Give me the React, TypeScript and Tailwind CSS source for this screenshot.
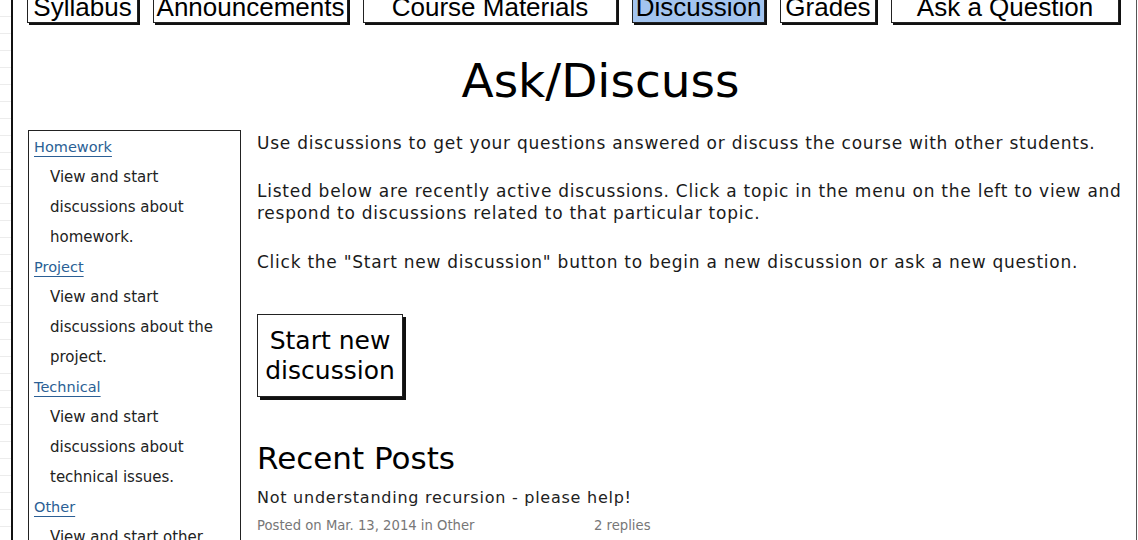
import React from 'react';

const tabs = [
  { label: 'Syllabus', w: 'w-[111px]' },
  { label: 'Announcements', w: 'w-[195px]' },
  { label: 'Course Materials', w: 'w-[254px]' },
  { label: 'Discussion', w: 'w-[133px]', active: true },
  { label: 'Grades', w: 'w-[96px]' },
  { label: 'Ask a Question', w: 'w-[228px]' },
];

const topics = [
  { name: 'Homework', lines: ['View and start', 'discussions about', 'homework.'] },
  { name: 'Project', lines: ['View and start', 'discussions about the', 'project.'] },
  { name: 'Technical', lines: ['View and start', 'discussions about', 'technical issues.'] },
  { name: 'Other', lines: ['View and start other', 'discussions.'] },
];

export default function App() {
  return (
    <div className="flex h-[540px] w-[1138px] overflow-hidden bg-white font-['DejaVu_Sans',sans-serif] text-[#1a1a1a]">
      {/* faint canvas grid outside the page frame */}
      <div className="w-[11px] shrink-0 bg-[repeating-linear-gradient(to_bottom,transparent_0,transparent_16px,#ececec_16px,#ececec_17px)]" />
      <div className="w-[2px] shrink-0 bg-[#111]" />

      <div className="flex min-w-0 flex-1 flex-col">
        {/* tab bar, scrolled partly out of view */}
        <nav className="-mt-[17px] flex gap-[15px] pl-[14px] font-['Liberation_Sans',Arial,sans-serif]">
          {tabs.map((t) => (
            <div
              key={t.label}
              className={`${t.w} flex h-[40px] shrink-0 items-end justify-center border-[1.5px] border-[#222] pb-[2px] text-[26px] leading-none text-black shadow-[2px_2px_0_#111] ${t.active ? 'bg-[#a3c4ef]' : 'bg-white'}`}
            >
              {t.label}
            </div>
          ))}
        </nav>
        <div className="ml-[15px] mt-[20px] h-[1.5px] w-[1094px] bg-[#444]" />

        <h1 className="mt-[14px] pl-[52px] text-center text-[47px] leading-[47px] text-black">Ask/Discuss</h1>

        <div className="mt-[26px] flex gap-[16px] pl-[15px]">
          <aside className="h-[420px] w-[213px] shrink-0 border-[1.5px] border-[#222] pl-[5px] pt-[1px] text-[15px] leading-[30px]">
            {topics.map((t) => (
              <div key={t.name}>
                <div className="text-[14.5px] text-[#2b5f95] underline underline-offset-[4px]">{t.name}</div>
                {t.lines.map((l) => (
                  <div key={l} className="pl-[16px] text-[#222]">
                    {l}
                  </div>
                ))}
              </div>
            ))}
          </aside>

          <main className="flex flex-col pt-[2px] text-[17px] leading-[22px] tracking-[0.75px]">
            <p>Use discussions to get your questions answered or discuss the course with other students.</p>
            <p className="mt-[26px] w-[880px]">
              Listed below are recently active discussions. Click a topic in the menu on the left to view and respond to discussions related to that particular topic.
            </p>
            <p className="mt-[27px]">Click the "Start new discussion" button to begin a new discussion or ask a new question.</p>

            <button className="mt-[41px] flex h-[83px] w-[146px] flex-col items-center justify-center border-[1.5px] border-[#222] bg-white text-[25px] leading-[30px] tracking-normal text-black shadow-[3px_3px_0_#111]">
              <span>Start new</span>
              <span>discussion</span>
            </button>

            <h2 className="mt-[43px] text-[31px] leading-[36px] tracking-normal text-black">Recent Posts</h2>
            <div className="mt-[11px] text-[16px] leading-[22px] text-[#222]">Not understanding recursion - please help!</div>
            <div className="mt-[7px] flex text-[13.2px] leading-[20px] tracking-normal text-[#777]">
              <span className="w-[337px]">Posted on Mar. 13, 2014 in Other</span>
              <span>2 replies</span>
            </div>
          </main>
        </div>
      </div>

      <div className="w-px shrink-0 bg-[#555]" />
      <div className="w-px shrink-0" />
    </div>
  );
}
